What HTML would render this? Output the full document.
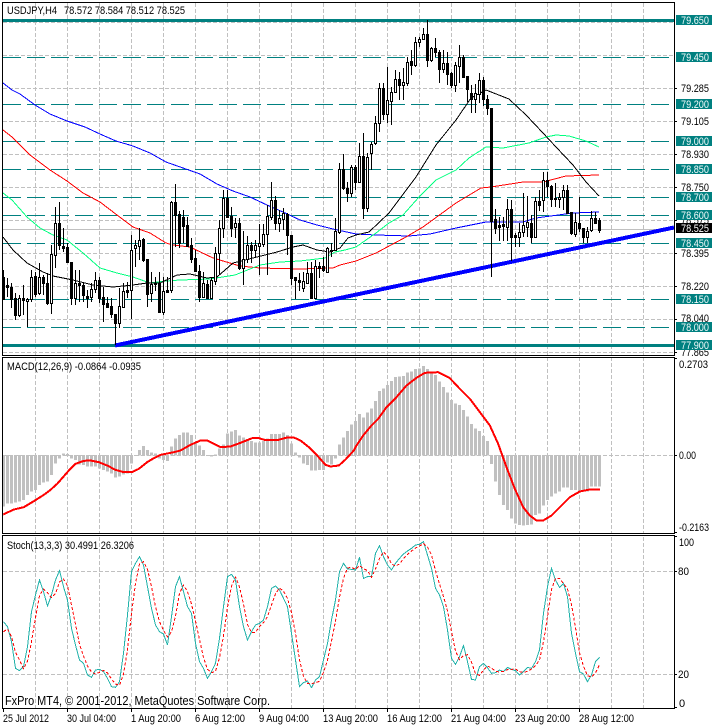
<!DOCTYPE html>
<html><head><meta charset="utf-8"><title>USDJPY,H4</title>
<style>
html,body{margin:0;padding:0;background:#fff;width:712px;height:726px;overflow:hidden}
svg{display:block;font-family:"Liberation Sans",sans-serif;font-size:11px}
.tl text{fill:#f2fafa}
</style></head><body>
<svg width="712" height="726" viewBox="0 0 712 726" shape-rendering="crispEdges">
<rect width="712" height="726" fill="#fff"/>
<!-- vertical grid -->
<path stroke="#c0c0c0" stroke-dasharray="4 2" fill="none" d="M35.5 3V708M67.5 3V708M99.5 3V708M131.5 3V708M163.5 3V708M195.5 3V708M227.5 3V708M259.5 3V708M291.5 3V708M323.5 3V708M355.5 3V708M387.5 3V708M419.5 3V708M451.5 3V708M483.5 3V708M515.5 3V708M547.5 3V708M579.5 3V708M611.5 3V708M643.5 3V708"/>
<!-- horizontal grid -->
<path stroke="#c0c0c0" stroke-dasharray="4 2" fill="none" d="M3 22.5H674M3 55.5H674M3 88.5H674M3 121.5H674M3 154.5H674M3 187.5H674M3 220.5H674M3 253.5H674M3 286.5H674M3 319.5H674M3 352.5H674M3 455.5H674M3 571.5H674M3 674.5H674"/>
<rect y="355" width="712" height="2" fill="#fff"/>
<rect y="533" width="712" height="2" fill="#fff"/>
<!-- bid line -->
<path stroke="#c0c0c0" d="M3 229.5H674"/>
<!-- teal levels -->
<path stroke="#008080" stroke-dasharray="18 6" fill="none" d="M3 57.5H674M3 104.5H674M3 141.5H674M3 169.5H674M3 197.5H674M3 215.5H674M3 243.5H674M3 299.5H674M3 327.5H674"/>
<path stroke="#008080" stroke-width="3" d="M3 20.5H674M3 345.5H674"/>
<!-- trendline -->
<path stroke="#0000ff" stroke-width="4" d="M115 345.5L674 227.5" fill="none"/>
<!-- MAs -->
<g fill="none">
<polyline stroke="#0000ff" points="3,83 12,90 20,94 35,105 50,114 67,121 85,127 100,134 116,141 133,146 150,153 166,162 183,168 200,174 217,184 233,191 250,197 267,205 283,212 300,220 317,225 333,229 356,234 376,235 409,236 430,234 456,228 486,222 523,222 536,218 573,213 599,212"/>
<polyline stroke="#ff0000" points="3,130 12,137 30,155 50,170 67,181 83,193 100,202 117,215 133,227 150,233 166,243 173,245 190,247 213,258 240,266 260,268 300,269 333,268 340,265 356,261 376,253 406,237 423,227 456,203 481,188 491,187 523,182 543,182 566,176 599,175"/>
<polyline stroke="#00ff7f" points="3,193 12,200 27,217 40,228 53,235 67,240 83,253 100,268 117,273 133,277 150,283 166,281 180,280 210,279 235,275 260,265 280,262 300,261 325,258 335,252 345,250 356,247 376,233 389,223 403,215 419,197 436,180 456,170 469,158 486,147 503,148 529,143 546,137 556,135 569,136 586,141 599,147"/>
<polyline stroke="#000000" points="3,237 13,250 27,263 43,272 53,276 73,280 93,285 113,287 133,285 147,283 160,283 177,275 190,274 207,278 217,277 233,263 257,257 277,252 293,247 303,245 317,250 330,252 340,248 348,238 356,235 369,232 389,213 416,177 436,145 456,120 471,98 486,90 509,99 526,115 543,133 556,147 573,165 586,182 599,196"/>
</g>
<!-- candles: wicks -->
<path stroke="#000" fill="none" d="M3.5 270V300M7.5 278V297M11.5 283V308M15.5 293V320M19.5 295V317M23.5 285V315M27.5 298V327M31.5 270V302M35.5 272V297M39.5 263V295M43.5 275V295M47.5 273V305M51.5 245V314M55.5 207V268M59.5 202V250M63.5 228V252M67.5 243V263M71.5 262V305M75.5 270V305M79.5 270V302M83.5 282V302M87.5 290V308M91.5 283V302M95.5 272V293M99.5 277V303M103.5 287V322M107.5 297V308M111.5 298V318M115.5 314V345M119.5 288V328M123.5 283V308M127.5 282V298M131.5 235V319M135.5 240V267M139.5 228V260M143.5 238V262M147.5 259V307M151.5 272V302M155.5 277V291M159.5 272V312M163.5 277V315M167.5 277V293M171.5 201V293M175.5 184V247M179.5 211V248M183.5 210V243M187.5 217V247M191.5 238V263M195.5 250V272M199.5 265V302M203.5 272V298M207.5 280V299M211.5 277V298M215.5 247V285M219.5 220V275M223.5 190V238M227.5 190V218M231.5 207V237M235.5 218V238M239.5 218V270M243.5 231V285M247.5 236V263M251.5 242V263M255.5 240V258M259.5 224V275M263.5 224V247M267.5 205V275M271.5 182V220M275.5 196V230M279.5 210V232M283.5 208V230M287.5 213V255M291.5 235V285M295.5 277V299M299.5 273V291M303.5 272V292M307.5 262V284M311.5 262V298M315.5 260V299M319.5 262V278M323.5 257V272M327.5 247V273M331.5 243V257M335.5 218V251M339.5 163V234M343.5 154V190M347.5 182V202M351.5 165V197M355.5 165V190M359.5 143V183M363.5 133V219M367.5 153V212M371.5 142V170M375.5 116V145M379.5 83V132M383.5 83V120M387.5 67V123M391.5 87V125M395.5 70V93M399.5 72V100M403.5 68V100M407.5 57V86M411.5 50V75M415.5 37V67M419.5 37V47M423.5 28V40M427.5 20V67M431.5 47V62M435.5 38V57M439.5 50V83M443.5 50V73M447.5 52V85M451.5 72V88M455.5 62V92M459.5 45V83M463.5 55V78M467.5 76V102M471.5 85V113M475.5 84V113M479.5 73V103M483.5 77V106M487.5 95V115M491.5 108V277M495.5 209V234M499.5 217V241M503.5 217V241M507.5 199V241M511.5 200V261M515.5 233V247M519.5 223V247M523.5 193V237M527.5 196V237M531.5 215V243M535.5 197V238M539.5 190V211M543.5 172V212M547.5 172V197M551.5 185V207M555.5 183V207M559.5 193V208M563.5 185V210M567.5 185V213M571.5 212V235M575.5 213V237M579.5 197V232M583.5 228V243M587.5 227V243M591.5 211V232M595.5 212V224M599.5 218V233"/>
<!-- candles: bodies -->
<path stroke="#000" stroke-width="3" fill="none" d="M3.5 277V300M7.5 285V288M11.5 287V300M15.5 298V316M19.5 298V316M23.5 298V301M27.5 299V302M31.5 277V300M35.5 276V295M39.5 277V294M43.5 277V284M47.5 283V304M51.5 254V304M55.5 223V256M59.5 223V246M63.5 246V249M67.5 247V263M71.5 262V299M75.5 283V299M79.5 283V286M83.5 285V296M87.5 296V299M91.5 289V298M95.5 280V290M99.5 280V299M103.5 297V305M107.5 303V308M111.5 306V315M115.5 314V324M119.5 306V324M123.5 291V308M127.5 290V293M131.5 250V291M135.5 245V249M139.5 240V247M143.5 239V261M147.5 259V295M151.5 284V294M155.5 283V285M159.5 283V313M163.5 291V313M167.5 290V293M171.5 202V291M175.5 202V216M179.5 214V244M183.5 217V227M187.5 225V247M191.5 245V260M195.5 258V272M199.5 271V298M203.5 283V298M207.5 284V299M211.5 280V299M215.5 253V282M219.5 228V254M223.5 198V229M227.5 198V218M231.5 216V229M235.5 223V228M239.5 223V269M243.5 259V269M247.5 245V260M251.5 245V251M255.5 245V251M259.5 243V247M263.5 234V245M267.5 216V235M271.5 200V218M275.5 200V224M279.5 218V224M283.5 213V220M287.5 214V236M291.5 235V279M295.5 277V281M299.5 280V283M303.5 281V289M307.5 273V284M311.5 273V299M315.5 266V299M319.5 266V269M323.5 266V271M327.5 248V273M331.5 250V252M335.5 231V251M339.5 169V233M343.5 169V189M347.5 188V194M351.5 167V194M355.5 167V183M359.5 156V183M363.5 156V209M367.5 157V209M371.5 144V154M375.5 123V144M379.5 88V124M383.5 88V115M387.5 100V115M391.5 92V102M395.5 79V93M399.5 79V86M403.5 82V86M407.5 62V84M411.5 61V66M415.5 42V66M419.5 39V43M423.5 34V40M427.5 34V61M431.5 48V61M435.5 48V53M439.5 52V70M443.5 63V70M447.5 63V75M451.5 73V86M455.5 65V86M459.5 57V67M463.5 57V78M467.5 76V90M471.5 93V100M475.5 93V100M479.5 80V95M483.5 80V100M487.5 99V109M491.5 108V222M495.5 219V229M499.5 225V228M503.5 224V227M507.5 209V228M511.5 209V238M515.5 235V238M519.5 232V238M523.5 225V233M527.5 222V228M531.5 223V238M535.5 201V238M539.5 201V206M543.5 180V201M547.5 180V187M551.5 186V200M555.5 198V200M559.5 197V200M563.5 190V198M567.5 190V214M571.5 212V234M575.5 222V235M579.5 223V229M583.5 228V238M587.5 231V238M591.5 218V231M595.5 218V224M599.5 220V231"/>
<path stroke="#fff" fill="none" d="M19.5 299V315M27.5 300V301M31.5 278V299M39.5 278V293M51.5 255V303M55.5 224V255M75.5 284V298M91.5 290V297M95.5 281V289M119.5 307V323M123.5 292V307M131.5 251V290M135.5 246V248M139.5 241V246M151.5 285V293M163.5 292V312M171.5 203V290M203.5 284V297M211.5 281V298M215.5 254V281M219.5 229V253M223.5 199V228M235.5 224V227M243.5 260V268M247.5 246V259M255.5 246V250M259.5 244V246M263.5 235V244M267.5 217V234M271.5 201V217M279.5 219V223M283.5 214V219M303.5 282V288M307.5 274V283M315.5 267V298M327.5 249V272M335.5 232V250M339.5 170V232M351.5 168V193M359.5 157V182M367.5 158V208M371.5 145V153M375.5 124V143M379.5 89V123M387.5 101V114M391.5 93V101M395.5 80V92M403.5 83V85M407.5 63V83M415.5 43V65M419.5 40V42M423.5 35V39M431.5 49V60M443.5 64V69M455.5 66V85M459.5 58V66M475.5 94V99M479.5 81V94M507.5 210V227M519.5 233V237M523.5 226V232M527.5 223V227M535.5 202V237M543.5 181V200M559.5 198V199M563.5 191V197M575.5 223V234M587.5 232V237M591.5 219V230"/>

<!-- MACD histogram -->
<g transform="translate(0,355) scale(1,.33333)">
<path stroke="#c0c0c0" stroke-width="3" fill="none" d="M3.5 300V455M7.5 300V445M11.5 300V445M15.5 300V442M19.5 300V440M23.5 300V435M27.5 300V420M31.5 300V410M35.5 300V405M39.5 300V390M43.5 300V382M47.5 300V380M51.5 300V360M55.5 300V325M59.5 300V310M63.5 295V301M67.5 297V303M71.5 300V310M75.5 300V315M79.5 300V328M83.5 300V330M87.5 300V335M91.5 300V335M95.5 300V335M99.5 300V340M103.5 300V345M107.5 300V350M111.5 300V355M115.5 300V368M119.5 300V365M123.5 300V358M127.5 300V355M131.5 300V325M135.5 300V303M139.5 285V302M143.5 273V302M147.5 285V302M151.5 292V302M155.5 295V302M159.5 300V310M163.5 300V315M167.5 300V318M171.5 275V302M175.5 250V302M179.5 240V302M183.5 232V302M187.5 232V302M191.5 240V302M195.5 262V302M199.5 272V302M203.5 285V302M207.5 300V303M211.5 300V305M215.5 298V302M219.5 280V302M223.5 268V302M227.5 235V302M231.5 230V302M235.5 225V302M239.5 242V302M243.5 248V302M247.5 252V302M251.5 258V302M255.5 262V302M259.5 262V302M263.5 258V302M267.5 250V302M271.5 237V302M275.5 237V302M279.5 237V302M283.5 232V302M287.5 240V302M291.5 265V302M295.5 292V302M299.5 300V308M303.5 300V325M307.5 300V330M311.5 300V347M315.5 300V347M319.5 300V345M323.5 300V345M327.5 300V322M331.5 300V328M335.5 300V310M339.5 268V302M343.5 248V302M347.5 228V302M351.5 208V302M355.5 198V302M359.5 177V302M363.5 188V302M367.5 173V302M371.5 160V302M375.5 138V302M379.5 108V302M383.5 100V302M387.5 90V302M391.5 78V302M395.5 66V302M399.5 64V302M403.5 63V302M407.5 53V302M411.5 50V302M415.5 42V302M419.5 40V302M423.5 33V302M427.5 42V302M431.5 50V302M435.5 60V302M439.5 80V302M443.5 96V302M447.5 113V302M451.5 135V302M455.5 145V302M459.5 150V302M463.5 165V302M467.5 185V302M471.5 207V302M475.5 220V302M479.5 228V302M483.5 243V302M487.5 258V302M491.5 300V327M495.5 300V380M499.5 300V420M503.5 300V450M507.5 300V465M511.5 300V490M515.5 300V505M519.5 300V510M523.5 300V512M527.5 300V510M531.5 300V508M535.5 300V480M539.5 300V475M543.5 300V452M547.5 300V435M551.5 300V425M555.5 300V415M559.5 300V410M563.5 300V398M567.5 300V397M571.5 300V405M575.5 300V405M579.5 300V408M583.5 300V410M587.5 300V410M591.5 300V395M595.5 300V395M599.5 300V395"/>
</g>
<g transform="translate(.5,355.5) scale(.33333)">
<polyline fill="none" stroke="#ff0000" stroke-width="6" points="8,477 40,462 70,455 100,437 130,418 150,403 170,385 185,368 205,345 225,325 250,316 270,315 295,320 320,330 345,343 370,350 395,350 415,340 440,320 460,308 480,298 520,290 540,285 570,268 600,255 620,255 640,265 660,275 690,273 720,262 755,248 775,248 795,254 830,254 860,246 880,246 900,255 925,275 950,300 975,328 990,333 1015,330 1035,312 1060,285 1068,270 1088,240 1113,210 1133,190 1158,155 1188,125 1218,90 1248,67 1273,52 1313,50 1348,68 1378,100 1408,130 1438,170 1468,210 1493,265 1518,335 1543,400 1568,455 1588,480 1608,495 1628,495 1653,480 1678,455 1708,425 1738,408 1768,402 1798,402"/>
</g>

<!-- Stoch -->
<g transform="translate(.5,530) scale(1,.33333)" fill="none">
<polyline vector-effect="non-scaling-stroke" stroke="#20b2aa" stroke-width="1" points="3,275 7,290 11,335 15,415 19,422 23,410 27,350 31,245 35,195 39,150 43,185 47,228 51,195 55,150 59,122 63,170 67,210 71,295 75,345 79,390 83,400 87,435 91,442 95,420 99,418 103,425 107,445 111,470 115,472 119,455 123,370 127,255 131,125 135,100 139,80 143,105 147,170 151,235 155,285 159,305 163,312 167,345 171,260 175,170 179,140 183,185 187,230 191,250 195,340 199,395 203,415 207,445 211,425 215,400 219,325 223,230 227,140 231,133 235,150 239,230 243,290 247,330 251,305 255,285 259,280 263,270 267,230 271,175 275,168 279,180 283,205 287,230 291,310 295,390 299,470 303,458 307,453 311,473 315,450 319,440 323,390 327,340 331,270 335,210 339,125 343,100 347,117 351,118 355,120 359,82 363,145 367,140 371,140 375,70 379,47 383,80 387,105 391,120 395,100 399,85 403,72 407,63 411,55 415,45 419,43 423,35 427,75 431,115 435,175 439,195 443,230 447,300 451,385 455,403 459,380 463,347 467,395 471,448 475,450 479,410 483,400 487,413 491,430 495,428 499,420 503,425 507,412 511,418 515,422 519,435 523,425 527,412 531,415 535,395 539,360 543,250 547,170 551,115 555,150 559,172 563,160 567,200 571,310 575,370 579,425 583,432 587,455 591,435 595,395 599,382"/>
<polyline vector-effect="non-scaling-stroke" stroke="#ff0000" stroke-width="1" stroke-dasharray="3 2" points="3,305 7,297 11,320 15,367 19,390 23,416 27,394 31,335 35,263 39,197 43,177 47,188 51,203 55,191 59,156 63,147 67,167 71,225 75,283 79,343 83,378 87,408 91,426 95,432 99,427 103,421 107,429 111,447 115,462 119,466 123,432 127,360 131,250 135,160 139,102 143,95 147,118 151,170 155,230 159,275 163,301 167,321 171,306 175,258 179,190 183,165 187,185 191,222 195,273 199,328 203,383 207,418 211,428 215,424 219,383 223,318 227,232 231,168 235,141 239,171 243,223 247,283 251,308 255,307 259,290 263,278 267,260 271,225 275,191 279,174 283,184 287,205 291,248 295,310 299,390 303,439 307,460 311,461 315,458 319,454 323,427 327,390 331,333 335,273 339,202 343,145 347,114 351,112 355,118 359,107 363,116 367,122 371,142 375,117 379,85 383,66 387,77 391,102 395,108 399,102 403,86 407,73 411,63 415,54 419,48 423,41 427,51 431,75 435,122 439,162 443,200 447,242 451,305 455,363 459,389 463,377 467,374 471,397 475,431 479,436 483,420 487,408 491,414 495,424 499,426 503,424 507,419 511,418 515,417 519,425 523,427 527,424 531,417 535,407 539,390 543,335 547,260 551,178 555,145 559,145 563,161 567,177 571,223 575,293 579,368 583,409 587,437 591,441 595,428 599,404"/>
</g>

<!-- Frames -->
<g fill="none" stroke="#000">
<rect x="2.5" y="2.5" width="672" height="353"/>
<rect x="2.5" y="357.5" width="672" height="176"/>
<rect x="2.5" y="535.5" width="672" height="173"/>
</g>
<!-- ticks -->
<path stroke="#000" d="M674 88.5h3M674 121.5h3M674 154.5h3M674 187.5h3M674 220.5h3M674 253.5h3M674 286.5h3M674 319.5h3M674 352.5h3M674 358.5h3M674 455.5h3M674 532.5h3M674 536.5h3M674 571.5h3M674 674.5h3M674 707.5h3M3.5 709v3M67.5 709v3M131.5 709v3M195.5 709v3M259.5 709v3M323.5 709v3M387.5 709v3M451.5 709v3M515.5 709v3M579.5 709v3"/>

<g shape-rendering="auto">
<!-- header text -->
<text x="7" y="14" lengthAdjust="spacingAndGlyphs" textLength="50">USDJPY,H4</text>
<text x="64" y="14" lengthAdjust="spacingAndGlyphs" textLength="121">78.572 78.584 78.512 78.525</text>
<text x="7" y="370" lengthAdjust="spacingAndGlyphs" textLength="134">MACD(12,26,9) -0.0864 -0.0935</text>
<text x="7" y="549" lengthAdjust="spacingAndGlyphs" textLength="127">Stoch(13,3,3) 30.4991 26.3206</text>
<text x="5" y="705" font-size="12.5" lengthAdjust="spacingAndGlyphs" textLength="265">FxPro MT4, © 2001-2012, MetaQuotes Software Corp.</text>
<!-- price axis -->
<g>
<text x="681" y="92" lengthAdjust="spacingAndGlyphs" textLength="28">79.285</text>
<text x="681" y="125" lengthAdjust="spacingAndGlyphs" textLength="28">79.105</text>
<text x="681" y="158" lengthAdjust="spacingAndGlyphs" textLength="28">78.930</text>
<text x="681" y="191" lengthAdjust="spacingAndGlyphs" textLength="28">78.750</text>
<text x="681" y="224" lengthAdjust="spacingAndGlyphs" textLength="28">78.575</text>
<text x="681" y="257" lengthAdjust="spacingAndGlyphs" textLength="28">78.395</text>
<text x="681" y="290" lengthAdjust="spacingAndGlyphs" textLength="28">78.220</text>
<text x="681" y="322" lengthAdjust="spacingAndGlyphs" textLength="28">78.040</text>
<text x="681" y="356" lengthAdjust="spacingAndGlyphs" textLength="28">77.865</text>
</g>
<g shape-rendering="crispEdges" fill="#008080">
<rect x="676" y="15" width="36" height="10"/>
<rect x="676" y="52" width="36" height="10"/>
<rect x="676" y="99" width="36" height="10"/>
<rect x="676" y="136" width="36" height="10"/>
<rect x="676" y="164" width="36" height="10"/>
<rect x="676" y="192" width="36" height="10"/>
<rect x="676" y="210" width="36" height="10"/>
<rect x="676" y="238" width="36" height="10"/>
<rect x="676" y="294" width="36" height="10"/>
<rect x="676" y="322" width="36" height="10"/>
<rect x="676" y="340" width="36" height="10"/>
<rect x="676" y="223" width="36" height="10" fill="#000"/>
</g>
<g class="tl">
<text x="681" y="24" lengthAdjust="spacingAndGlyphs" textLength="28">79.650</text>
<text x="681" y="61" lengthAdjust="spacingAndGlyphs" textLength="28">79.450</text>
<text x="681" y="108" lengthAdjust="spacingAndGlyphs" textLength="28">79.200</text>
<text x="681" y="145" lengthAdjust="spacingAndGlyphs" textLength="28">79.000</text>
<text x="681" y="173" lengthAdjust="spacingAndGlyphs" textLength="28">78.850</text>
<text x="681" y="201" lengthAdjust="spacingAndGlyphs" textLength="28">78.700</text>
<text x="681" y="219" lengthAdjust="spacingAndGlyphs" textLength="28">78.600</text>
<text x="681" y="247" lengthAdjust="spacingAndGlyphs" textLength="28">78.450</text>
<text x="681" y="303" lengthAdjust="spacingAndGlyphs" textLength="28">78.150</text>
<text x="681" y="331" lengthAdjust="spacingAndGlyphs" textLength="28">78.000</text>
<text x="681" y="349" lengthAdjust="spacingAndGlyphs" textLength="28">77.900</text>
<text x="681" y="232" lengthAdjust="spacingAndGlyphs" textLength="28" style="fill:#fff">78.525</text>
</g>
<!-- indicator axis -->
<text x="679" y="368" lengthAdjust="spacingAndGlyphs" textLength="29">0.2703</text>
<text x="679" y="459" lengthAdjust="spacingAndGlyphs" textLength="17">0.00</text>
<text x="679" y="531" lengthAdjust="spacingAndGlyphs" textLength="30">-0.2163</text>
<text x="679" y="546" lengthAdjust="spacingAndGlyphs" textLength="15">100</text>
<text x="678" y="575" lengthAdjust="spacingAndGlyphs" textLength="11">80</text>
<text x="678" y="678" lengthAdjust="spacingAndGlyphs" textLength="11">20</text>
<text x="679" y="707">0</text>
<!-- time axis -->
<g>
<text x="3" y="722" lengthAdjust="spacingAndGlyphs" textLength="46">25 Jul 2012</text>
<text x="67" y="722" lengthAdjust="spacingAndGlyphs" textLength="49">30 Jul 04:00</text>
<text x="131" y="722" lengthAdjust="spacingAndGlyphs" textLength="50">1 Aug 20:00</text>
<text x="195" y="722" lengthAdjust="spacingAndGlyphs" textLength="50">6 Aug 12:00</text>
<text x="259" y="722" lengthAdjust="spacingAndGlyphs" textLength="50">9 Aug 04:00</text>
<text x="323" y="722" lengthAdjust="spacingAndGlyphs" textLength="55">13 Aug 20:00</text>
<text x="387" y="722" lengthAdjust="spacingAndGlyphs" textLength="55">16 Aug 12:00</text>
<text x="451" y="722" lengthAdjust="spacingAndGlyphs" textLength="55">21 Aug 04:00</text>
<text x="515" y="722" lengthAdjust="spacingAndGlyphs" textLength="55">23 Aug 20:00</text>
<text x="579" y="722" lengthAdjust="spacingAndGlyphs" textLength="55">28 Aug 12:00</text>
</g>
</g>
</svg>
</body></html>
